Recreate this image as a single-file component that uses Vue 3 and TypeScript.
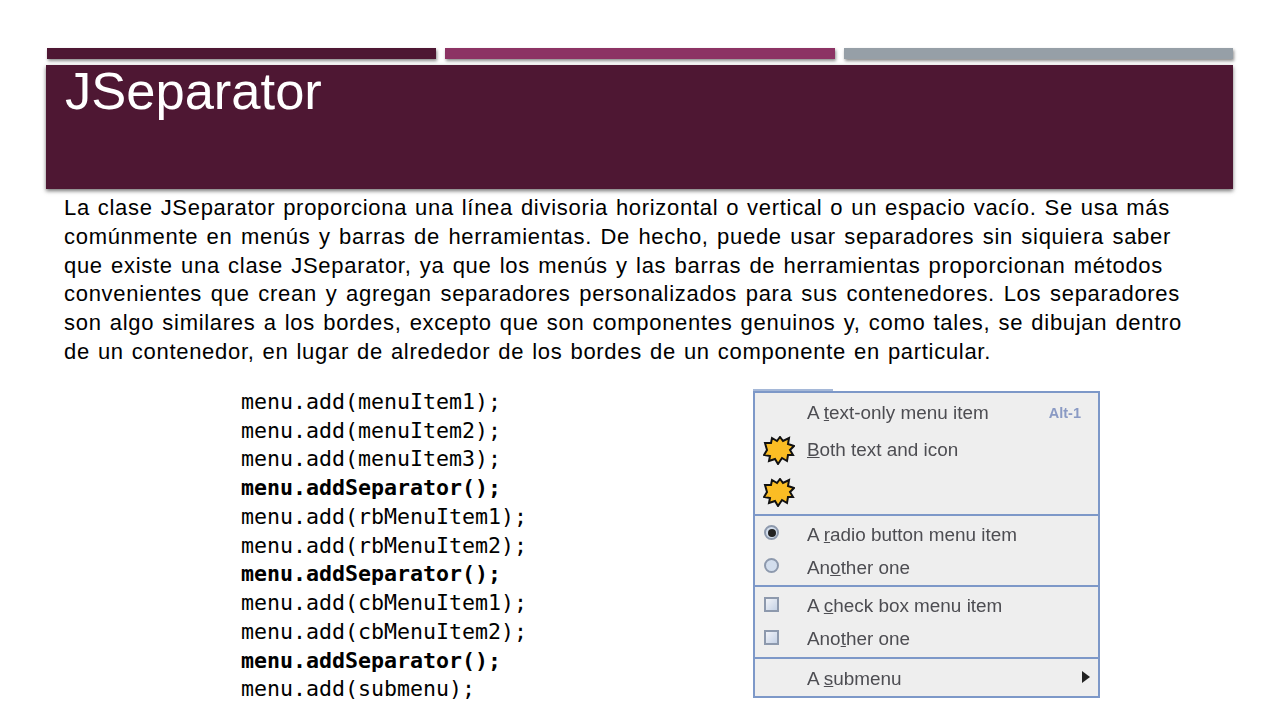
<script setup lang="ts">
const lines = [
  { text: 'La clase JSeparator proporciona una línea divisoria horizontal o vertical o un espacio vacío. Se usa más', width: 1106 },
  { text: 'comúnmente en menús y barras de herramientas. De hecho, puede usar separadores sin siquiera saber', width: 1107 },
  { text: 'que existe una clase JSeparator, ya que los menús y las barras de herramientas proporcionan métodos', width: 1099 },
  { text: 'convenientes que crean y agregan separadores personalizados para sus contenedores. Los separadores', width: 1116 },
  { text: 'son algo similares a los bordes, excepto que son componentes genuinos y, como tales, se dibujan dentro', width: 1118 },
  { text: 'de un contenedor, en lugar de alrededor de los bordes de un componente en particular.', width: 927 }
]
const code = [
  { t: 'menu.add(menuItem1);', b: false },
  { t: 'menu.add(menuItem2);', b: false },
  { t: 'menu.add(menuItem3);', b: false },
  { t: 'menu.addSeparator();', b: true },
  { t: 'menu.add(rbMenuItem1);', b: false },
  { t: 'menu.add(rbMenuItem2);', b: false },
  { t: 'menu.addSeparator();', b: true },
  { t: 'menu.add(cbMenuItem1);', b: false },
  { t: 'menu.add(cbMenuItem2);', b: false },
  { t: 'menu.addSeparator();', b: true },
  { t: 'menu.add(submenu);', b: false }
]
const star = '2,7 8,7 9,2 14,5 17,1 20,5 26,2 25,8 31,10 27,14 30,19 25,19 24,25 19,22 15,28 12,23 6,25 7,20 1,19 4,14'
</script>

<template>
  <main class="slide">
    <div class="bars">
      <div class="bar dark"></div>
      <div class="bar pink"></div>
      <div class="bar grey"></div>
    </div>
    <header class="banner"><h1>JSeparator</h1></header>
    <section class="para">
      <div v-for="l in lines" :key="l.text" class="pline" :style="{ width: l.width + 'px' }">{{ l.text }}</div>
    </section>
    <section class="bottom">
      <div class="code">
        <div v-for="(c, i) in code" :key="i" :class="{ strong: c.b }">{{ c.t }}</div>
      </div>
      <div class="menu">
        <span class="tab"></span>
        <div class="group first">
          <div class="row r1"><span class="ico"></span><span class="lbl">A <u>t</u>ext-only menu item</span><span class="acc">Alt-1</span></div>
          <div class="row r2"><span class="ico"><svg class="star" width="32" height="29" viewBox="0 0 32 29"><polygon :points="star" fill="#fbbd24" stroke="#111" stroke-width="2" stroke-linejoin="miter"/></svg></span><span class="lbl"><u>B</u>oth text and icon</span></div>
          <div class="row r3"><span class="ico"><svg class="star low" width="32" height="29" viewBox="0 0 32 29"><polygon :points="star" fill="#fbbd24" stroke="#111" stroke-width="2" stroke-linejoin="miter"/></svg></span></div>
        </div>
        <div class="group pad">
          <div class="row r33"><span class="ico"><span class="radio on"></span></span><span class="lbl">A <u>r</u>adio button menu item</span></div>
          <div class="row r33"><span class="ico"><span class="radio"></span></span><span class="lbl">An<u>o</u>ther one</span></div>
        </div>
        <div class="group pad padb">
          <div class="row r33"><span class="ico"><span class="check"></span></span><span class="lbl">A <u>c</u>heck box menu item</span></div>
          <div class="row r33"><span class="ico"><span class="check"></span></span><span class="lbl">Ano<u>t</u>her one</span></div>
        </div>
        <div class="group">
          <div class="row r4"><span class="ico"></span><span class="lbl">A <u>s</u>ubmenu</span><span class="arrow"></span></div>
        </div>
      </div>
    </section>
  </main>
</template>

<style scoped>
.slide {
  width: 1280px;
  height: 720px;
  box-sizing: border-box;
  padding: 48px 47px 0 46px;
  background: #fff;
  overflow: hidden;
  font-family: "Liberation Sans", Arial, sans-serif;
}
.bars { display: flex; gap: 9px; height: 11px; padding-left: 1px; }
.bar { flex: 1; box-shadow: 1px 2px 3px rgba(0, 0, 0, 0.45); }
.dark { background: #4e1733; }
.pink { background: #8c3364; }
.grey { background: #969fa7; }
.banner {
  margin-top: 6px;
  height: 124px;
  background: #4e1733;
  box-shadow: 0 2px 4px rgba(0, 0, 0, 0.55);
  padding-left: 19px;
  box-sizing: border-box;
}
h1 {
  margin: 0;
  color: #fff;
  font-weight: 400;
  font-size: 52.5px;
  line-height: 52px;
}
.para { margin: 5px 0 0 18px; font-size: 22px; letter-spacing: 0.7px; line-height: 28.8px; color: #000; }
.pline { text-align: justify; text-align-last: justify; white-space: nowrap; }
.bottom { display: flex; margin-top: 21px; }
.code {
  margin-left: 195px;
  width: 512px;
  font-family: "DejaVu Sans Mono", "Liberation Mono", monospace;
  font-size: 21.6px;
  line-height: 28.75px;
  color: #000;
}
.strong { font-weight: 700; }
.menu {
  position: relative;
  width: 347px;
  height: 307px;
  box-sizing: border-box;
  margin-top: 3px;
  background: #eeeeee;
  border: 2px solid #7d98c8;
  font-size: 18.9px;
  color: #4d4d52;
  filter: blur(0.4px);
}
.tab {
  position: absolute;
  left: -2px;
  top: -4px;
  width: 80px;
  height: 2px;
  background: #a5b8d8;
}
.group { border-top: 2px solid #7d98c8; }
.group.first { border-top: 0; }
.group.pad { padding-top: 3px; }
.group.padb { padding-bottom: 1px; }
.row { display: flex; align-items: center; padding-right: 8px; }
.r1 { height: 40px; }
.r2 { height: 34px; }
.r3 { height: 47px; }
.r33 { height: 33px; }
.r4 { height: 37px; padding-top: 3px; box-sizing: border-box; }
.ico {
  width: 52px;
  box-sizing: border-box;
  padding-left: 9px;
  display: flex;
  align-items: center;
  flex: none;
}
.star { margin: 2px 0 0 -1px; }
.star.low { margin-top: 4px; }
.lbl { white-space: nowrap; }
.acc { margin-left: auto; margin-right: 9px; font-size: 14.5px; font-weight: 700; color: #8a9ac4; }
.radio {
  width: 15px;
  height: 15px;
  margin-bottom: 5px;
  box-sizing: border-box;
  border-radius: 50%;
  border: 2px solid #8d99ad;
  background: #d3deed;
  position: relative;
}
.radio.on::after {
  content: "";
  position: absolute;
  inset: 1.5px;
  border-radius: 50%;
  background: #222;
}
.check {
  width: 15px;
  height: 15px;
  margin-bottom: 4px;
  box-sizing: border-box;
  border: 2px solid #8d99ad;
  background: linear-gradient(135deg, #f1f3f8, #c5d2e6);
}
.arrow {
  margin-left: auto;
  margin-bottom: 4px;
  border-left: 8px solid #222;
  border-top: 6.5px solid transparent;
  border-bottom: 6.5px solid transparent;
}
</style>
